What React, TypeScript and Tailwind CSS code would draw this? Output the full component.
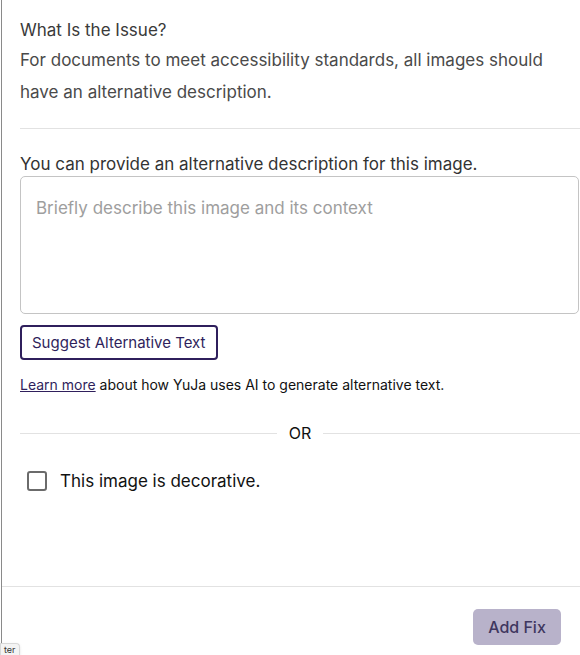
import { useState } from 'react';

export default function App() {
  const [alt, setAlt] = useState('');
  const [decorative, setDecorative] = useState(false);

  return (
    <div className="relative h-[655px] w-[580px] overflow-hidden bg-white font-['Inter',sans-serif]">
      <div className="ml-px flex h-full flex-col border-l border-[#8a8a8a]">
        {/* Описание проблемы */}
        <div className="pl-[18px] pr-2 pt-[19px]">
          <h3 className="text-[17px] leading-[22px] text-[#3a3a3a]">What Is the Issue?</h3>
          <p className="mt-[3px] text-[17px] leading-[32px] text-[#4a4a4a]">
            For documents to meet accessibility standards, all images should have an alternative description.
          </p>
        </div>

        <div className="ml-[18px] mt-[20px] border-t border-[#e2e2e2]" />

        {/* Альтернативный текст */}
        <div className="pl-[18px] pt-[24px]">
          <label htmlFor="alt" className="block text-[17px] leading-[22px] text-[#333]">
            You can provide an alternative description for this image.
          </label>
          <textarea
            id="alt"
            value={alt}
            onChange={(e) => setAlt(e.target.value)}
            placeholder="Briefly describe this image and its context"
            className="mt-[1px] block h-[138px] w-[559px] resize-none rounded-[5px] border border-[#c4c4c4] px-[15px] pt-[21px] pb-[15px] text-[17px] leading-[20px] text-[#333] placeholder:text-[#9e9e9e] focus:outline-none"
          />
          <button className="mt-[11px] rounded-[4px] border-2 border-[#2f1f5c] px-[10px] py-[6px] text-[15px] leading-[19px] text-[#2f1f5c]">
            Suggest Alternative Text
          </button>
          <p className="mt-[16px] text-[14px] leading-[18px] text-[#111]">
            <a href="#" className="text-[#2f1f5c] underline">Learn more</a> about how YuJa uses AI to generate alternative text.
          </p>
        </div>

        {/* Разделитель OR */}
        <div className="ml-[18px] mt-[29px] flex items-center gap-[12px]">
          <div className="flex-1 border-t border-[#e2e2e2]" />
          <span className="text-[16px] leading-[20px] text-[#111]">OR</span>
          <div className="flex-1 border-t border-[#e2e2e2]" />
        </div>

        <label className="ml-[25px] mt-[27px] flex items-center gap-[13px]">
          <input
            type="checkbox"
            checked={decorative}
            onChange={(e) => setDecorative(e.target.checked)}
            className="size-[20px] appearance-none rounded-[3px] border-2 border-[#6b6b6b] bg-white"
          />
          <span className="text-[17px] leading-[22px] text-[#111]">This image is decorative.</span>
        </label>

        <div className="mt-auto border-t border-[#e2e2e2]">
          <div className="flex justify-end pr-[19px] pb-[10px] pt-[22px]">
            <button disabled className="h-[36px] w-[88px] rounded-[5px] bg-[#b8b2ca] text-[16px] font-medium text-[#3f3760]">
              Add Fix
            </button>
          </div>
        </div>
      </div>

      {/* Подсказка внизу слева */}
      <div className="absolute bottom-0 left-0 h-[12px] rounded-tr-[4px] border border-b-0 border-[#d8d8d8] bg-[#f4f4f4] px-[3px] text-[9px] leading-[11px] text-[#333] shadow-sm">
        ter
      </div>
    </div>
  );
}
